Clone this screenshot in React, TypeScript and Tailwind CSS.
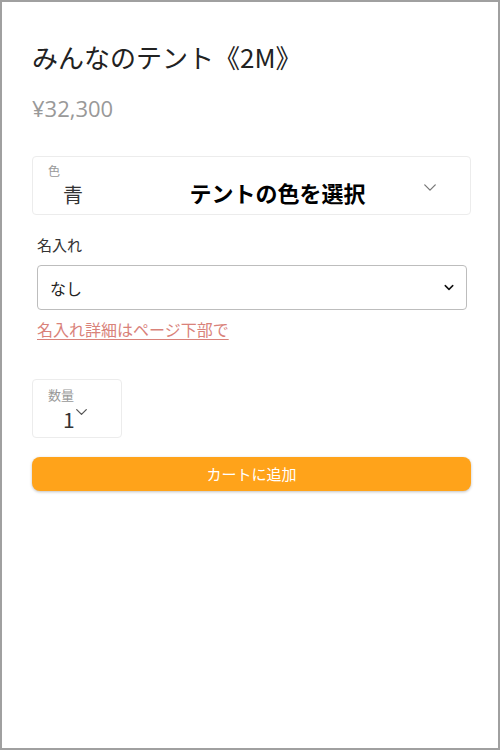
import React from "react";

const font = { fontFamily: '"Noto Sans CJK JP", "Noto Sans", sans-serif' };

function Chevron({ className, stroke = "#666", sw = 1.6 }: { className?: string; stroke?: string; sw?: number }) {
  return (
    <svg viewBox="0 0 16 10" className={className} fill="none" stroke={stroke} strokeWidth={sw} strokeLinecap="round" strokeLinejoin="round">
      <path d="M2 2 L8 8 L14 2" />
    </svg>
  );
}

export default function App() {
  return (
    <div style={font} className="w-[500px] h-[750px] border-2 border-[#a0a0a0] bg-white text-[#222]">
      <div className="flex flex-col pl-[30px] pr-[27px] pt-[33px]">
        <h1 className="text-[26px] leading-[44px] font-normal text-[#222]">みんなのテント《2M》</h1>
        <div className="mt-[15px] text-[22px] leading-[28px] text-[#999] font-[Open_Sans,sans-serif]">¥32,300</div>

        <div className="relative mt-[34px] h-[59px] rounded border border-[#ececec] flex items-center">
          <div className="absolute left-[15px] top-[6px] text-[12px] leading-[16px] text-[#999]">色</div>
          <div className="absolute left-[30px] top-[24px] text-[20px] leading-[28px] text-[#333]">青</div>
          <div className="flex-1 text-center pl-[52px] text-[22px] font-bold leading-[28px] text-black mt-[13px]">テントの色を選択</div>
          <Chevron className="absolute right-[33px] top-[26px] w-[14px] h-[9px]" stroke="#777" sw={1.5} />
        </div>

        <div className="pl-[5px] mt-[19px] text-[15px] leading-[22px] text-[#333]">名入れ</div>
        <div className="ml-[5px] mr-[4px] mt-[9px] h-[45px] rounded border border-[#bdbdbd] flex items-center justify-between pl-[12px] pr-[12px]">
          <span className="text-[16px] text-[#222]">なし</span>
          <Chevron className="w-[10px] h-[7px]" stroke="#111" sw={2.4} />
        </div>
        <a className="ml-[5px] mt-[7px] text-[16px] leading-[24px] text-[#d9827a] underline underline-offset-[3px] self-start">名入れ詳細はページ下部で</a>

        <div className="relative mt-[38px] w-[90px] h-[59px] rounded border border-[#ececec]">
          <div className="absolute left-[15px] top-[6px] text-[13px] leading-[18px] text-[#999]">数量</div>
          <div className="absolute left-[30px] top-[25px] text-[21px] leading-[28px] text-[#333]">1</div>
          <Chevron className="absolute left-[42px] top-[28px] w-[13px] h-[8px]" stroke="#555" sw={1.6} />
        </div>

        <button className="mt-[19px] h-[34px] w-full rounded-[8px] bg-[#ffa31a] shadow-[0_1px_3px_rgba(0,0,0,0.25)] text-white text-[15px] leading-[34px]">カートに追加</button>
      </div>
    </div>
  );
}
